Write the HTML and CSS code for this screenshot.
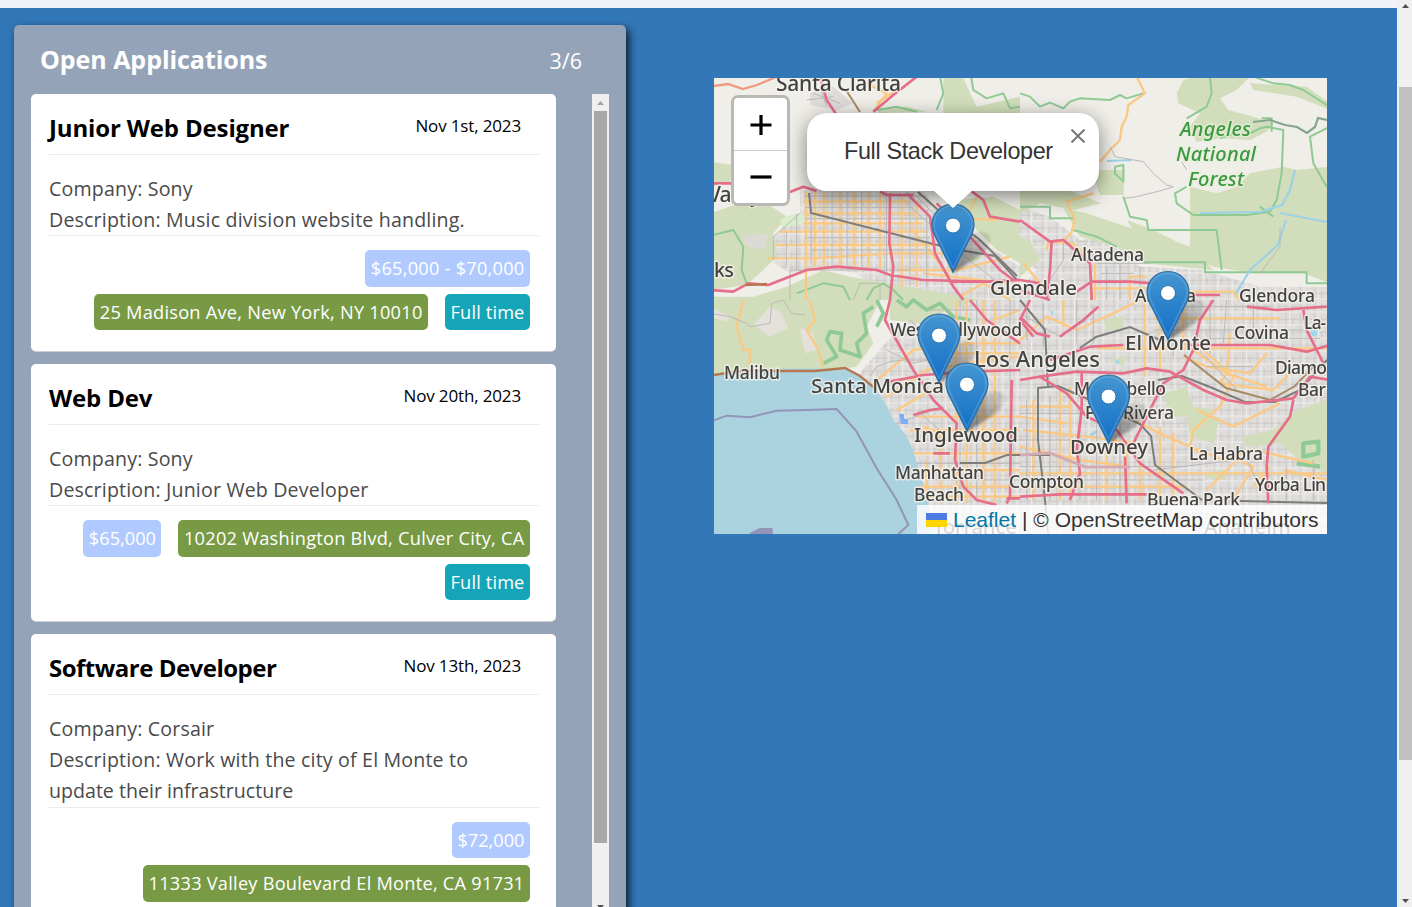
FILE: index.html
```html
<!DOCTYPE html>
<html lang="en">
<head>
<meta charset="utf-8">
<title>Open Applications</title>
<link rel="stylesheet" href="styles.css">
</head>
<body>
<div class="page">
  <div class="content">
    <div class="topbar"></div>
    <main class="main">
      <section class="panel">
        <header class="panel-head"><h1>Open Applications</h1><span class="count">3/6</span></header>
        <div class="panel-body">
          <div class="cards">
            <article class="card">
              <div class="card-head"><h2 class="wide">Junior Web Designer</h2><time>Nov 1st, 2023</time></div>
              <div class="desc"><p>Company: Sony</p><p>Description: Music division website handling.</p></div>
              <div class="tags"><span class="tag pay range">$65,000 - $70,000</span><span class="tag place">25 Madison Ave, New York, NY 10010</span><span class="tag kind">Full time</span></div>
            </article>
            <article class="card">
              <div class="card-head"><h2 class="wide">Web Dev</h2><time>Nov 20th, 2023</time></div>
              <div class="desc"><p>Company: Sony</p><p>Description: Junior Web Developer</p></div>
              <div class="tags"><span class="tag pay">$65,000</span><span class="tag place">10202 Washington Blvd, Culver City, CA</span><span class="tag kind">Full time</span></div>
            </article>
            <article class="card">
              <div class="card-head"><h2>Software Developer</h2><time>Nov 13th, 2023</time></div>
              <div class="desc"><p>Company: Corsair</p><p>Description: Work with the city of El Monte to<br><span class="snug">update their infrastructure</span></p></div>
              <div class="tags"><span class="tag pay">$72,000</span><span class="tag place">11333 Valley Boulevard El Monte, CA 91731</span></div>
            </article>
          </div>
          <div class="list-scroll"><svg class="up" viewBox="0 0 7 4"><path d="M0 4L3.5 0L7 4z"/></svg><div class="list-thumb"></div><svg class="down" viewBox="0 0 7 4"><path d="M0 0H7L3.5 4z"/></svg></div>
        </div>
      </section>
      <section class="map">
        <svg class="tiles" viewBox="714 78 613 456">
          <defs>
            <pattern id="streets" width="43" height="39" patternUnits="userSpaceOnUse"><rect width="43" height="39" fill="#dfdddb"/><path d="M0 7H43M8 0V39M29 0V22" stroke="#cccbca" stroke-width="3"/><path d="M0 24H43M19 0V39" stroke="#efeeeb" stroke-width="3"/></pattern>
            <linearGradient id="pinfill" x2="0" y2="1"><stop offset="0" stop-color="#4596d1"/><stop offset="1" stop-color="#126fc6"/></linearGradient>
            <linearGradient id="shade" x1="0" y1="1" x2=".7" y2="0"><stop offset="0" stop-color="#222" stop-opacity=".6"/><stop offset="1" stop-color="#222" stop-opacity=".12"/></linearGradient>
            <filter id="soft" x="-30%" y="-30%" width="160%" height="160%"><feGaussianBlur stdDeviation="1.5"/></filter>
            <filter id="tile" x="0" y="0" width="100%" height="100%"><feGaussianBlur stdDeviation=".65"/></filter>
            <g id="pin"><path d="M0 0L14 -34Q25 -46 36 -38Q40 -28 25 -16Z" fill="url(#shade)" filter="url(#soft)"/>
              <path d="M0-69C-12-69-21-59.500-21-48.500C-21-43-19-38-16-33L0-.5L16-33C19-38 21-43 21-48.500C21-59.500 12-69 0-69Z" fill="url(#pinfill)" stroke="#2e6f9f" stroke-width="1.200"/>
              <path d="M0-67C-11-67-19-58.500-19-48.500C-19-43-17-39-14.500-34.500L0-5L14.500-34.500C17-39 19-43 19-48.500C19-58.500 11-67 0-67Z" fill="none" stroke="#fff" stroke-opacity=".15" stroke-width="1.600"/>
              <circle cy="-47.500" r="7.500" fill="#fff" stroke="#2c74ad" stroke-width="1"/></g>
          </defs>
          <g filter="url(#tile)">
          <rect x="714" y="78" width="613" height="456" fill="#f0eee8"/>
          <!-- urban land -->
          <g transform="translate(710 70) scale(.333333)">
            <path d="M270 360L640 365L700 440L930 590V690H540L440 610L320 590L240 610L180 570L190 500L270 430Z" fill="url(#streets)"/>
            <path d="M300 70L370 50L430 100L380 120L300 105Z" fill="#dddcda"/>
            <path d="M930 410L1020 440L1110 510L1200 500L1290 590L1480 600L1650 650L1860 650V1392H640L600 1260L560 1130L440 920L500 850L640 690H900L980 600L930 560Z" fill="url(#streets)"/>
          </g>
          <!-- parks and mountains -->
          <g fill="#d2debb">
            <g transform="translate(710 70) scale(.333333)">
              <path d="M0 275L70 285L60 340L0 350ZM0 430L90 400L170 400L230 440L190 490L200 560L160 600L110 645L0 660ZM0 680H130L230 650L340 600L420 620L540 640L700 670L820 690H0ZM290 235L330 225L330 285L290 280ZM510 120L590 110L650 125L500 130ZM700 20L760 25L800 110L930 80V130H700ZM740 390L850 380L930 420V580L860 540L800 480ZM760 560L820 560L790 580Z"/>
              <path d="M210 450Q250 425 285 435L275 465L215 472Z" fill="#d8eecb"/>
            </g>
            <g transform="translate(1020 70) scale(.333333)">
              <path d="M490 30L530 18L690 20L650 60L600 85L625 120L700 140L760 160L740 185L690 210L600 205L530 215L510 170L540 130L475 100L470 70ZM690 40L860 50L930 100V120L830 80L700 60ZM510 350L590 370L650 350L690 310L740 300L790 290L830 300L930 290V640L850 610L700 610L580 590L510 560ZM215 300L315 300L310 375L240 375ZM0 360L120 350L245 400L160 420L60 400L0 430ZM130 415L200 430L320 470L400 490L510 530L580 600L370 580L290 530L180 500ZM320 450L400 480L480 520L470 560L380 540ZM0 500L30 510L60 570L0 620Z"/>
            </g>
            <g transform="translate(710 300) scale(.333333)"><path d="M0 0H510L470 80L490 130L440 200L370 210L210 215L0 230Z"/><path d="M540 0H800L700 35L620 70L540 60Z"/></g>
            <g transform="translate(1020 300) scale(.333333)"><path d="M430 280L500 260L520 320L580 330L560 370L510 350L450 350ZM500 350L600 350L580 430L510 410ZM665 410L760 390L830 330L920 300V520L850 490L780 430L680 440ZM250 60L310 50L310 95L260 90ZM270 180L320 170L310 200ZM560 520L610 510L620 540L560 535Z"/></g>
          </g>
          <g transform="translate(710 300) scale(.333333)" fill="#e3e1da"><path d="M180 20L215 40L235 85L180 110L130 75ZM270 85L310 100L320 150L285 160ZM0 20L60 50L50 65L0 50Z"/></g>
          <path d="M743 236L768 234L764 250L745 246Z" fill="#dcdad5"/>
          <path d="M714 375C750 368 820 367 851 370C868 380 884 395 894 421C903 430 911 440 917 463C923 485 930 500 932 534H714Z" fill="#aad3df"/>
          <!-- trails and green borders -->
          <g fill="none" stroke="#8fca94" stroke-width="6" stroke-linejoin="round">
            <g transform="translate(710 70) scale(.333333)"><path d="M10 495L70 480L100 530L95 600L110 640M780 0L790 60L830 85L880 70L900 115L930 110M690 20L700 70L680 120M500 120L560 110L620 125M260 670L340 640L400 650L420 690M470 690L490 655L520 640L550 660L580 690"/></g>
            <g transform="translate(1020 70) scale(.333333)"><path d="M0 70L30 80L60 110L90 98L130 115L150 95L180 85L270 90L300 75L320 85L370 70M570 20L575 70L560 110L500 145M700 20L760 40L810 45L850 60L920 105M600 205L640 190L680 195L720 175L740 170L790 180L785 310L770 390L750 425L680 435H520L470 400L465 370L500 350M930 170L870 200L880 280L920 350M0 410H90V445H160M310 380L330 440L380 450L385 480H590L605 600M160 480L230 500L290 530M370 577H555V607H860V640H930M720 410L760 440"/><path d="M285 290L310 285L310 335L285 310ZM725 145H755V185"/></g>
            <g transform="translate(710 300) scale(.333333)"><path d="M340 190L380 170L350 120L360 95L395 100L390 150L450 170L440 130L470 100L460 40L490 20M500 0L520 40L500 80M560 0L590 20L610 0L650 30L690 10L730 50L780 60" stroke-width="11"/></g>
            <g transform="translate(1020 300) scale(.333333)"><path d="M850 430L895 425L895 460L850 470ZM830 490L900 500" stroke-width="13"/></g>
          </g>
          <path d="M1253 122L1270 120L1285 125L1297 127L1307 133L1315 127L1318 118L1327 120" fill="none" stroke="#85a48b" stroke-width="2.200"/>
          <g fill="none" stroke="#9bd2e6"><path d="M1107 161L1132 160M1200 213L1260 212L1282 205L1290 190L1295 170M1280 213L1327 222M1286 220L1278 245L1250 270L1235 295M1145 355V365M900 416L907 422M1090 435L1098 431" stroke-width="2.200"/></g>
          <g transform="translate(710 300) scale(.333333)" fill="none" stroke="#9394b7" stroke-width="6"><path d="M0 365L50 347L120 352L200 332L290 330L380 327L440 395L500 505L560 600L595 675L565 702"/><path d="M120 702L150 687H185V702Z" fill="#9394b7"/></g>
          <!-- streets -->
          <g fill="none" stroke="#fbc983" stroke-width="7" stroke-linejoin="round">
            <g transform="translate(710 70) scale(.333333)"><path d="M288 365V690M316 365V590M342 365V590M390 365V590M432 365V590M475 365V595M510 370V600M576 380V650M620 390V650M210 485H650M195 525H670M280 395H600M280 430H625M280 460H640M170 565H310L540 550H700M560 600H740L900 560M600 470L720 620M640 610L900 640M800 380L780 420L760 445L860 450M750 680L820 640L900 690M470 40L530 70L490 125M500 100L560 60"/></g>
            <g transform="translate(1020 70) scale(.333333)"><path d="M350 20L375 70L325 105L320 140L305 170L300 210L270 240L240 275M220 370L140 395L165 450L155 485L135 510M80 540L85 515L160 520L200 560M225 580V690M330 690V620H380M220 655H380M10 580L70 650M510 665H640L660 690"/></g>
            <g transform="translate(710 300) scale(.333333)"><path d="M100 0L80 80L100 150H120V195M300 0L315 60L290 90L325 150L340 200M500 240L610 150L780 130H930M530 290L650 210L830 180L930 170M560 330L700 250M640 160H930M620 350H930M600 390H930M610 460H930M620 510H930M630 560H930M640 590H930M740 0V610M770 0V610M820 0V610M855 0V610M640 380L690 400V610M650 480V600M850 60L930 30"/></g>
            <g transform="translate(1020 300) scale(.333333)"><path d="M0 120L80 50L170 90L280 40L360 0M130 0V80M375 0V230M420 20V210M490 0V130L620 220L740 260M400 55H780M230 145H920M490 170L560 200L690 220L740 160M550 150L640 230L600 320L520 390L510 440L560 470M630 100L620 220L600 250L760 270L820 210M0 320H150M0 350L140 370M10 390L200 410L360 430M0 440L180 480L330 500M0 520H920M40 300V600M120 270V600M150 260V600M260 440V600M320 430V600M360 480V600M420 380V600M460 400V600M300 340L420 400L510 440L610 480L700 450L880 490M0 560H500M530 330L640 380L700 350L780 310M560 570L650 480L700 500L640 600M700 560L750 500M790 510L920 540"/></g>
          </g>
          <g fill="none" stroke="#bab9b9" stroke-width="3">
            <g transform="translate(710 70) scale(.333333)"><path d="M190 570L190 500L270 430M230 485V590M260 430V600M280 378H650M285 413H610M285 446H650M285 503H660M300 540H680M303 365V580M366 365V590M411 365V590M455 365V590M530 365V610M600 380V650M650 420V650M700 500L730 600M590 400L690 490M620 380L720 480M240 690V600H600M430 690L450 640H510V690M740 540L880 650M310 70L390 100M330 50L350 110M290 90L370 80"/></g>
            <g transform="translate(1020 70) scale(.333333)"><path d="M270 230L285 260L370 275L400 310L440 345L460 350L430 360L350 380L315 385M130 520V570L90 630M230 580H390M240 610H340M300 580V690M260 590V690M360 590V690M485 275L500 300M780 470V530L720 610"/></g>
            <g transform="translate(710 300) scale(.333333)"><path d="M0 40L60 50L110 70L120 80L180 70L185 10L220 0L245 40L285 45M480 230L500 200L540 185L580 180H660M530 150L610 190L690 170M560 370L700 320M750 0V600M800 0V600M900 0V600M630 420H930M650 540H930M620 490H930M620 330L700 400M650 30H930M600 60L700 160"/></g>
            <g transform="translate(1020 300) scale(.333333)"><path d="M0 40L120 110L200 60M20 20V120M70 10V140M170 0V130M220 20V130M460 0V170M570 0V160M620 0L610 130M700 0V120M400 90H860M520 115H900M450 20H750M20 300V600M90 290V600M180 320V600M230 320V600M300 370V600M0 340H220M0 420H200M0 500H500M0 540H550M400 510L650 480M520 130L650 270M560 200H700M660 440L720 560M800 500V600M880 480V600"/></g>
          </g>
          <!-- railways -->
          <g fill="none" stroke="#7d7d7b"><path d="M809 193L811 213L890 233L953 249L995 256L1017 280M918 192L937 209L979 239L1017 276M1048 534L1045 500L1038 440L1038 388L1058 386L1090 400L1140 424L1151 436L1155 465L1202 500M1020 300L1045 330L1048 388M1080 348L1096 337L1130 327L1160 340M1158 380L1182 376L1210 387L1245 402H1275L1300 390L1327 360M960 463H985L1007 455H1050M1240 501L1327 503" stroke-width="2"/><path d="M846 90L860 112M1184 355L1226 388L1270 400L1295 386L1315 365" stroke="#a58b66" stroke-width="2"/></g>
          <!-- freeways -->
          <g fill="none" stroke="#e66e89" stroke-width="8" stroke-linejoin="round">
            <g transform="translate(710 70) scale(.333333)"><path d="M10 340H70L230 370L280 350L320 363M330 20L350 90L390 150M620 20L550 75L490 125M510 365L530 375H610M540 370L538 520L550 590L540 690M590 370L660 440L675 550L730 650L760 690M0 660L70 665L115 640L175 645L290 600L380 590L500 600L540 615L640 630L830 635L930 630M680 400L780 500L870 600L910 630M780 360L820 390L840 440L930 455"/></g>
            <g transform="translate(1020 70) scale(.333333)"><path d="M0 450L90 515L130 510L210 580L215 690M95 515L90 600L80 690M170 665L215 635H330L400 640M0 630L60 640M510 675H600M0 660L90 690"/></g>
            <g transform="translate(710 300) scale(.333333)"><path d="M540 0L525 60L610 210L670 300L740 370L735 480L760 560L800 600L860 615M540 245L640 225L780 215L930 210M610 345L660 330L700 325M670 460H720M905 240L900 590L890 610M780 0L830 60L930 130M890 595H930"/></g>
            <g transform="translate(1020 300) scale(.333333)"><path d="M0 50L50 100L90 110M30 0L0 60L40 110M0 240L60 230L170 215L310 220L380 205L450 215L550 270L620 300L680 310L820 295L870 230L930 240M90 180L210 140L310 135M500 135H750L860 155L930 135M580 0L540 60L520 150L490 210L430 250L380 350L340 430M680 20L770 30L920 20M850 30L860 90L890 150L910 190M820 300L810 350L745 440L740 500L745 610M60 230L140 280L200 350L290 390L360 490L490 580M185 220V330L170 450L180 520L150 600M315 470L320 610M0 590L120 583H380M120 110L190 60L235 20"/></g>
          </g>
          <g fill="none" stroke="#b4774f" stroke-width="2.300"><path d="M714 375L740 371H815L845 368L860 376L877 390M746 285L767 284"/><path d="M714 86L728 84L743 89L757 85L776 77" stroke="#ef9a7f"/></g>
          <path d="M1020 455L1050 453L1085 467H1130" fill="none" stroke="#d5abb3" stroke-width="3"/>
          <!-- ponds -->
          <path d="M899 414H904V419H908V424H901Z" fill="#7caefa"/><path d="M1115 360l5 1-3 4zM1050 310l4 2-2 4zM1310 330h7v6h-5z" fill="#9ed8ed"/>
          <!-- place names -->
          <g class="names">
            <text x="776" y="91" textLength="125" font-size="21">Santa Clarita</text><text x="708" y="202" textLength="53" font-size="21">Valley</text><text x="714" y="277" textLength="20" font-size="20">ks</text>
            <text x="990" y="295" textLength="87" font-size="20.500">Glendale</text><text x="1071" y="261" textLength="73" font-size="17.500">Altadena</text><text x="1135" y="302" textLength="61" font-size="17.500">Arcadia</text><text x="1239" y="302" textLength="76" font-size="17.500">Glendora</text>
            <text x="890" y="336" textLength="132" font-size="17.500">West Hollywood</text><text x="974" y="367" textLength="126" font-size="22">Los Angeles</text><text x="811" y="393" textLength="133" font-size="20.500">Santa Monica</text><text x="724" y="379" textLength="56" font-size="17.500">Malibu</text>
            <text x="914" y="442" textLength="104" font-size="20.500">Inglewood</text><text x="895" y="479" textLength="89" font-size="17.500">Manhattan</text><text x="914" y="501" textLength="50" font-size="17.500">Beach</text><text x="1009" y="488" textLength="75" font-size="17.500">Compton</text>
            <text x="1125" y="350" textLength="86" font-size="20.500">El Monte</text><text x="1234" y="339" textLength="55" font-size="17.500">Covina</text><text x="1304" y="329" textLength="22" font-size="17.500">La-</text><text x="1275" y="374" textLength="52" font-size="17.500">Diamo</text><text x="1298" y="396" textLength="28" font-size="17.500">Bar</text>
            <text x="1074" y="395" textLength="92" font-size="17.500">Montebello</text><text x="1085" y="419" textLength="89" font-size="17.500">Pico Rivera</text><text x="1070" y="454" textLength="78" font-size="20.500">Downey</text><text x="1189" y="460" textLength="74" font-size="17.500">La Habra</text><text x="1255" y="491" textLength="71" font-size="17.500">Yorba Lin</text><text x="1147" y="505.500" textLength="93" font-size="17.500">Buena Park</text><text x="933" y="534" textLength="84" font-size="20.500">Torrance</text><text x="1204" y="534" textLength="87" font-size="20.500">Anaheim</text>
            <g class="forest"><text x="1180" y="136" textLength="71" font-size="20">Angeles</text><text x="1176" y="161" textLength="80" font-size="20">National</text><text x="1188" y="186" textLength="56" font-size="20">Forest</text></g>
          </g>
          </g>
          <use href="#pin" x="953" y="273"/><use href="#pin" x="1168" y="340.500"/><use href="#pin" x="939" y="383"/><use href="#pin" x="967" y="432"/><use href="#pin" x="1108.500" y="444"/>
        </svg>
        <div class="zoom"><div class="zb"><svg viewBox="0 0 22 22"><path d="M.5 11H21.500M11 1V21"/></svg></div><div class="zb"><svg viewBox="0 0 22 22"><path d="M.5 11H21.500"/></svg></div></div>
        <div class="popup"><span>Full Stack Developer</span><svg class="close" viewBox="0 0 14 14"><path d="M.5 .5L13.500 13.500M13.500 .5L.5 13.500"/></svg><svg class="tip" viewBox="0 0 40 20"><path d="M0 0H40L20 18Z"/></svg></div>
        <div class="credit"><svg viewBox="0 0 21 14"><path fill="#4c7be1" d="M0 0h21v7H0z"/><path fill="#ffd500" d="M0 7h21v7H0z"/></svg><a>Leaflet</a><span>| © OpenStreetMap contributors</span></div>
      </section>
    </main>
  </div>
  <div class="page-scroll"><svg class="up" viewBox="0 0 7 4"><path d="M0 4L3.500 0L7 4z"/></svg><div class="page-thumb"></div><svg class="down" viewBox="0 0 7 4"><path d="M0 0H7L3.500 4z"/></svg></div>
</div>
</body>
</html>
```
FILE: styles.css
```css
* { box-sizing: border-box; }
body { margin: 0; overflow: hidden; font-family: "Open Sans", sans-serif; }
h1, h2, p { margin: 0; }
.page { display: flex; width: 1412px; height: 907px; overflow: hidden; }
.content { flex: 1; height: 907px; background: #3277b8; }
.topbar { height: 8px; background: #eff3f9; }
.main { display: flex; align-items: flex-start; height: 899px; overflow: hidden; padding: 17px 0 0 14px; }
.panel { width: 612px; height: 960px; flex: none; background: #95a3b9; border-radius: 5px; box-shadow: 3px 4px 8px #000c; }
.panel-head { display: flex; justify-content: space-between; align-items: center; height: 69px; padding: 0 44px 0 26px; color: #fff; }
.panel-head h1 { padding-bottom: 2px; font-size: 25px; line-height: 36px; letter-spacing: -.05px; }
.count { font-size: 21.5px; padding-top: 2px; }
.panel-body { display: flex; justify-content: space-between; padding: 0 17px; }
.cards { display: flex; flex-direction: column; gap: 13px; width: 525px; }
.card { min-height: 257px; padding: 0 17px 20px 18px; background: #fff; border-radius: 5px; box-shadow: 0 1px 0 #cbd0d6; }
.card-head { display: flex; justify-content: space-between; height: 61px; padding: 16px 18px 0 0; border-bottom: 1px solid #ebebeb; color: #000; }
.card-head h2 { font-size: 24px; line-height: 36px; letter-spacing: -.5px; }
.card-head h2.wide { letter-spacing: -.15px; }
.card-head time { font-size: 17px; line-height: 32px; letter-spacing: -.15px; }
.desc { padding-top: 18px; border-bottom: 1px solid #ebebeb; color: #4a4a4a; font-size: 19.6px; line-height: 31.2px; letter-spacing: .17px; }
.snug { letter-spacing: 0; }
.tags { display: flex; flex-wrap: wrap; justify-content: flex-end; gap: 7px 17px; padding: 14px 9px 0 4px; }
.tag { height: 36.5px; padding: 0 5.500px; border-radius: 5px; color: #fff; font-size: 18.2px; line-height: 37px; white-space: nowrap; }
.pay { background: #b0caff; }
.place { background: #789a45; }
.kind { background: #14a5b9; letter-spacing: .15px; }
.place, .range { letter-spacing: .25px; }
.list-scroll { display: flex; flex-direction: column; align-items: center; width: 17px; height: 819px; padding: 7px 0 1px; background: #f0f0f0; }
.list-thumb { flex: none; width: 13px; height: 732px; margin-top: 6px; background: #a8a8a8; }
.up, .down { flex: none; display: block; width: 7px; height: 4px; fill: #505050; }
.list-scroll .up { fill: #a3a3a3; }
.list-scroll .down { margin-top: 62px; }
.page-scroll { display: flex; flex-direction: column; align-items: center; width: 15px; height: 907px; padding: 4px 0 4px 2px; background: #f0f0f0; }
.page-thumb { width: 13px; height: 673px; margin-top: 79px; background: #c1c1c1; }
.page-scroll .down { margin-top: auto; }
.map { position: relative; flex: none; width: 613px; height: 456px; margin: 53px 0 0 88px; overflow: hidden; font-family: "Liberation Sans", Arial, sans-serif; }
.tiles { display: block; width: 613px; height: 456px; }
.names { font-family: "Noto Sans", sans-serif; font-weight: 500; fill: #434342; stroke: #f5f3ee; stroke-opacity: .75; stroke-width: 3px; paint-order: stroke; stroke-linejoin: round; }
.forest { fill: #3b9a41; stroke: #e8eedb; font-style: italic; }
.zoom { position: absolute; left: 17px; top: 17px; width: 59px; height: 111px; border: 3px solid #b9b8b3; border-radius: 7px; background: #fff; }
.zb { display: flex; align-items: center; justify-content: center; height: 52px; padding: 2px 0 0 1px; }
.zb + .zb { height: 53px; padding-top: 0; border-top: 1px solid #ccc; }
.zb svg { width: 22px; height: 22px; stroke: #000; stroke-width: 3.200; }
.popup { position: absolute; left: 93px; top: 35px; width: 292px; height: 78px; padding: 0 37px; border-radius: 20px; background: #fff; box-shadow: 0 5px 20px #0007; color: #333; font-size: 23.4px; letter-spacing: -.35px; line-height: 77px; white-space: nowrap; }
.close { position: absolute; right: 14px; top: 16px; width: 14px; height: 14px; stroke: #757575; stroke-width: 2; }
.tip { position: absolute; left: 126px; top: 77px; width: 40px; height: 20px; fill: #fff; }
.credit { position: absolute; right: 0; bottom: 0; display: flex; align-items: center; width: 410px; height: 29px; padding-left: 9px; background: #fffc; color: #333; font-size: 21px; line-height: 29px; white-space: nowrap; }
.credit svg { width: 21px; height: 14px; margin-right: 6px; }
.credit a { color: #0078a8; margin-right: 6px; }
```
